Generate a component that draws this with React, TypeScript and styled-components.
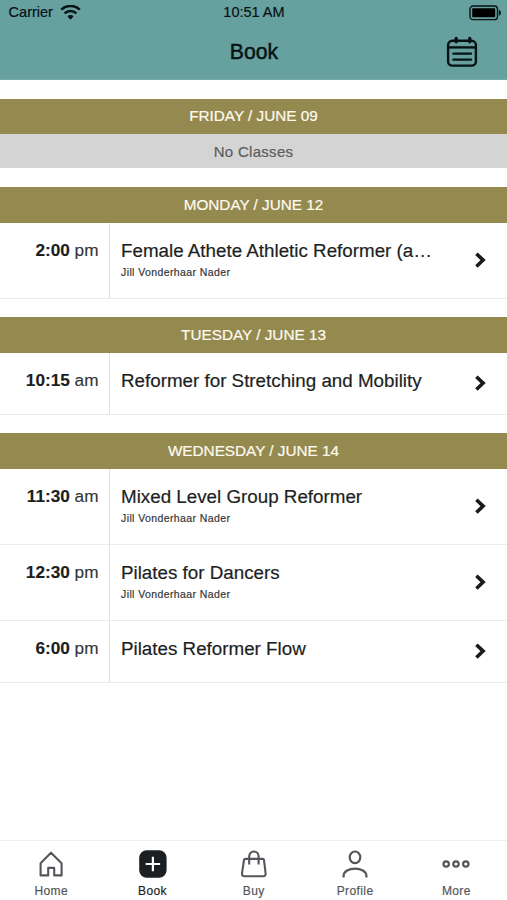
import React from 'react';
import styled, { createGlobalStyle } from 'styled-components';

const GlobalStyle = createGlobalStyle`
  *, *::before, *::after { box-sizing: border-box; }
  body { margin: 0; background: #fff; font-family: "Liberation Sans", Arial, sans-serif; color: #1d1f23; }
  svg { display: block; flex: none; }
`;

const Screen = styled.div`
  display: flex;
  flex-direction: column;
  height: 900px;
  overflow: hidden;
  background: #fff;
`;

const Header = styled.header`
  height: 80px;
  flex: none;
  background: #67a19f;
  border-bottom: 1px solid #79aaa8;
  color: #071214;
`;

const StatusBar = styled.div`
  display: grid;
  grid-template-columns: 1fr auto 1fr;
  align-items: center;
  height: 25px;
  padding: 0 5px 0 8px;
  font-size: 14.5px;
  line-height: 17px;
  -webkit-text-stroke: 0.2px currentColor;
`;

const Carrier = styled.div`
  display: flex;
  align-items: center;
  gap: 7.5px;
  padding-left: 0.6px;
`;

const Clock = styled.span`
  margin-right: 2px;
`;

const BatterySlot = styled.div`
  justify-self: end;
`;

const TitleBar = styled.div`
  display: grid;
  grid-template-columns: 1fr auto 1fr;
  align-items: center;
  height: 54px;
  padding: 0 29px;
`;

const Title = styled.h1`
  grid-column: 2;
  margin: 0 0 0 1px;
  font-size: 21.2px;
  line-height: 24px;
  font-weight: 400;
  -webkit-text-stroke: 0.45px currentColor;
`;

const CalendarButton = styled.button`
  justify-self: end;
  padding: 0;
  border: 0;
  background: none;
  color: #071214;
`;

const Schedule = styled.main`
  flex: 1;
  min-height: 0;
`;

const Day = styled.section`
  padding-top: 18.6px;
`;

const DayHeading = styled.h2`
  display: flex;
  align-items: center;
  justify-content: center;
  height: 35.6px;
  margin: 0;
  padding-bottom: 0.4px;
  background: #948a50;
  color: #fffaf0;
  font-size: 15.3px;
  line-height: 18px;
  font-weight: 400;
  -webkit-text-stroke: 0.2px currentColor;
`;

const NoClasses = styled.div`
  display: flex;
  align-items: center;
  justify-content: center;
  height: 34.2px;
  background: #d4d4d4;
  color: #5c5c5c;
  font-size: 15px;
  letter-spacing: 0.3px;
  -webkit-text-stroke: 0.2px currentColor;
`;

const ClassRow = styled.div<{ $tall: boolean }>`
  display: grid;
  grid-template-columns: 110px 1fr 53px;
  height: ${(p) => (p.$tall ? 76.1 : 61.9)}px;
  border-bottom: 1px solid #e9ebeb;
`;

const Time = styled.div`
  padding: 17px 10.5px 0 0;
  border-right: 1px solid #dfe1e2;
  text-align: right;
  font-size: 17.2px;
  line-height: 20px;
  color: #33363a;
  white-space: nowrap;
  -webkit-text-stroke: 0.15px currentColor;

  b { color: #1b1d20; }
`;

const Details = styled.div`
  min-width: 0;
  padding: 17px 20px 0 11px;
`;

const ClassName = styled.div`
  overflow: hidden;
  text-overflow: ellipsis;
  white-space: nowrap;
  font-size: 18.8px;
  line-height: 22px;
  -webkit-text-stroke: 0.2px currentColor;
`;

const Teacher = styled.div`
  margin-top: 4px;
  font-size: 10.5px;
  line-height: 13px;
  letter-spacing: 0.4px;
  color: #34373a;
  -webkit-text-stroke: 0.2px currentColor;
`;

const ArrowCell = styled.div`
  display: flex;
  align-items: center;
  padding: 0 0 1px 20px;
`;

const TabBar = styled.nav`
  display: grid;
  grid-template-columns: repeat(5, 1fr);
  height: 60px;
  flex: none;
  padding-left: 0.6px;
  border-top: 1px solid #f0f0f0;
`;

const Tab = styled.a<{ $active?: boolean }>`
  display: flex;
  flex-direction: column;
  align-items: center;
  padding-top: 8px;
  color: ${(p) => (p.$active ? '#1b1f22' : '#53575b')};
  font-size: 12px;
  line-height: 14px;
  letter-spacing: 0.4px;
  -webkit-text-stroke: 0.2px currentColor;
`;

const TabLabel = styled.span`
  margin-top: 5px;
`;

const WifiIcon = () => (
  <svg width="21" height="15" viewBox="0 0 21 15" fill="none" stroke="currentColor" strokeWidth="2.5">
    <path d="M1.2 4.7C6.5-.3 14.5-.3 19.8 4.7" />
    <path d="M4.6 8.4C8 5.2 13 5.2 16.4 8.4" />
    <path d="M7.6 11.4C9 9.6 12 9.6 13.4 11.4L11.3 13.9Q10.5 14.7 9.7 13.9Z" fill="currentColor" stroke="none" />
  </svg>
);

const BatteryIcon = () => (
  <svg width="33" height="16" viewBox="0 0 33 16">
    <rect x="1" y="1" width="27.5" height="13.6" rx="3.2" fill="none" stroke="currentColor" strokeWidth="1.4" />
    <rect x="3.2" y="3.3" width="23" height="9" rx="0.8" fill="#000" />
    <path d="M29.9 4.8c2.7.8 2.7 5.2 0 6z" fill="currentColor" />
  </svg>
);

const CalendarIcon = () => (
  <svg width="32" height="32" viewBox="0 0 32 32" fill="none" stroke="currentColor" strokeWidth="2.4" strokeLinecap="round">
    <rect x="2.1" y="4.8" width="27.8" height="24.8" rx="4.2" />
    <path d="M2.5 11.4h27" strokeLinecap="butt" />
    <path d="M10.2 2.4v3.4M23.8 2.4v3.4" strokeWidth="3.4" />
    <path d="M7.4 17.6h17.6M7.4 23.6h17.6" />
  </svg>
);

const ArrowIcon = () => (
  <svg width="14" height="18" viewBox="0 0 14 18" fill="none" stroke="#191b1e" strokeWidth="3.6">
    <path d="M2.4 2.7 9.1 9.1 2.4 15.5" />
  </svg>
);

const HomeIcon = () => (
  <svg width="30" height="30" viewBox="0 0 30 30" fill="none" stroke="currentColor" strokeWidth="2.1" strokeLinejoin="round">
    <path d="M15 3.7 25.6 14.2V26.4H18.2V18.9H12.2V26.4H4.6V14.2Z" />
  </svg>
);

const BookIcon = () => (
  <svg width="30" height="30" viewBox="0 0 30 30">
    <rect x="1.2" y="1.3" width="27.4" height="27.4" rx="7.5" fill="#1b1f22" />
    <path d="M14.9 7.8v14.4M7.7 15h14.4" stroke="#fff" strokeWidth="2.2" />
  </svg>
);

const BagIcon = () => (
  <svg width="30" height="30" viewBox="0 0 30 30" fill="none" stroke="currentColor" strokeWidth="2.1" strokeLinejoin="round">
    <path d="M6.4 9.9H23.6Q24.8 9.9 25 11L26.6 24.3Q26.8 27.2 24.2 27.2H5.4Q2.8 27.2 3 24.3L5 11Q5.2 9.9 6.4 9.9Z" />
    <path d="M10.2 15.5V7.5C10.2 .8 19.6 .8 19.6 7.5V15.5" />
  </svg>
);

const ProfileIcon = () => (
  <svg width="30" height="30" viewBox="0 0 30 30" fill="none" stroke="currentColor" strokeWidth="2.2">
    <ellipse cx="15" cy="8.3" rx="5.3" ry="5.8" />
    <path d="M3.6 28.5V27C3.6 17.1 26.4 17.1 26.4 27V28.5" />
  </svg>
);

const MoreIcon = () => (
  <svg width="30" height="30" viewBox="0 0 30 30" fill="none" stroke="currentColor" strokeWidth="2.2">
    <circle cx="5.2" cy="15" r="2.7" />
    <circle cx="15" cy="15" r="2.7" />
    <circle cx="24.8" cy="15" r="2.7" />
  </svg>
);

type ClassItem = { time: string; half: string; name: string; teacher?: string };

const teacher = 'Jill Vonderhaar Nader';

const days: { label: string; classes: ClassItem[] }[] = [
  { label: 'FRIDAY / JUNE 09', classes: [] },
  {
    label: 'MONDAY / JUNE 12',
    classes: [{ time: '2:00', half: 'pm', name: 'Female Athete Athletic Reformer (a…', teacher }],
  },
  {
    label: 'TUESDAY / JUNE 13',
    classes: [{ time: '10:15', half: 'am', name: 'Reformer for Stretching and Mobility' }],
  },
  {
    label: 'WEDNESDAY / JUNE 14',
    classes: [
      { time: '11:30', half: 'am', name: 'Mixed Level Group Reformer', teacher },
      { time: '12:30', half: 'pm', name: 'Pilates for Dancers', teacher },
      { time: '6:00', half: 'pm', name: 'Pilates Reformer Flow' },
    ],
  },
];

const tabs = [
  { label: 'Home', Icon: HomeIcon },
  { label: 'Book', Icon: BookIcon, active: true },
  { label: 'Buy', Icon: BagIcon },
  { label: 'Profile', Icon: ProfileIcon },
  { label: 'More', Icon: MoreIcon },
];

export default function App() {
  return (
    <>
      <GlobalStyle />
      <Screen>
        <Header>
          <StatusBar>
            <Carrier>
              <span>Carrier</span>
              <WifiIcon />
            </Carrier>
            <Clock>10:51 AM</Clock>
            <BatterySlot>
              <BatteryIcon />
            </BatterySlot>
          </StatusBar>
          <TitleBar>
            <Title>Book</Title>
            <CalendarButton aria-label="Calendar">
              <CalendarIcon />
            </CalendarButton>
          </TitleBar>
        </Header>
        <Schedule>
          {days.map((day) => (
            <Day key={day.label}>
              <DayHeading>{day.label}</DayHeading>
              {day.classes.length === 0 && <NoClasses>No Classes</NoClasses>}
              {day.classes.map((c) => (
                <ClassRow key={c.time} $tall={Boolean(c.teacher)}>
                  <Time>
                    <b>{c.time}</b> {c.half}
                  </Time>
                  <Details>
                    <ClassName>{c.name}</ClassName>
                    {c.teacher && <Teacher>{c.teacher}</Teacher>}
                  </Details>
                  <ArrowCell>
                    <ArrowIcon />
                  </ArrowCell>
                </ClassRow>
              ))}
            </Day>
          ))}
        </Schedule>
        <TabBar>
          {tabs.map(({ label, Icon, active }) => (
            <Tab key={label} $active={active}>
              <Icon />
              <TabLabel>{label}</TabLabel>
            </Tab>
          ))}
        </TabBar>
      </Screen>
    </>
  );
}
